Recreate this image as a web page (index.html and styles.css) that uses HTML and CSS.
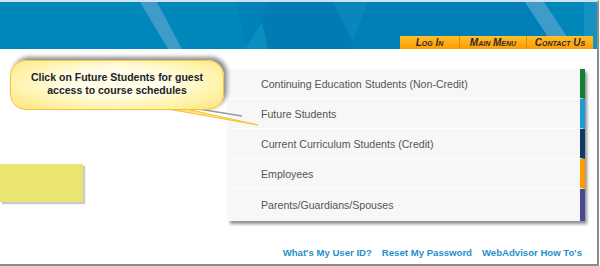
FILE: index.html
```html
<!DOCTYPE html>
<html>
<head>
<meta charset="utf-8">
<link rel="stylesheet" href="styles.css">
</head>
<body>
<div class="frame">
  <header class="header">
    <svg class="header-bg" width="597" height="47" viewBox="0 0 597 47" preserveAspectRatio="none">
      <rect width="597" height="47" fill="#0088bb"/>
      <polygon points="236,0 268,0 256,47 246,47" fill="#0082b8"/>
      <polygon points="268,0 333,0 356,47 250,47" fill="#007bb4"/>
      <polygon points="333,0 368,0 383,47 356,47" fill="#0a86bb"/>
      <polygon points="368,0 525,0 556,47 350,47" fill="#0080b7"/>
      <polygon points="140,0 157,0 182,47 168,47" fill="#3f9cc9"/>
      <polygon points="525,0 544,0 575,47 556,47" fill="#3f9cc9"/>
      <polygon points="584,0 597,0 597,47 584,47" fill="#1592c2"/>
      <polygon points="245,47 262,20 268,47" fill="#0a8ec0"/>
    </svg>
    <nav class="nav">
      <a class="tab tab-login">Log In</a>
      <a class="tab tab-menu">Main Menu</a>
      <a class="tab tab-contact">Contact Us</a>
    </nav>
  </header>
  <main class="main">
    <div class="left">
      <div class="yellow-block"></div>
    </div>
    <ul class="menu">
      <li class="item green">Continuing Education Students (Non-Credit)</li>
      <li class="item blue">Future Students</li>
      <li class="item navy">Current Curriculum Students (Credit)</li>
      <li class="item orange">Employees</li>
      <li class="item purple">Parents/Guardians/Spouses</li>
    </ul>
    <svg class="tail" width="120" height="30" viewBox="0 0 120 30">
      <polyline points="30,6 92,16" fill="none" stroke="#9a9a9a" stroke-width="1.6"/>
      <polygon points="12,8 32,8 108,25" fill="#ffe680" stroke="#f2c230" stroke-width="1"/>
    </svg>
    <div class="callout">Click on Future Students for guest<br>access to course schedules</div>
  </main>
  <footer class="links">
    <a class="link">What's My User ID?</a>
    <a class="link">Reset My Password</a>
    <a class="link">WebAdvisor How To's</a>
  </footer>
</div>
</body>
</html>
```
FILE: styles.css
```css
html, body {
  margin: 0;
  padding: 0;
  background: #ffffff;
}
body {
  width: 600px;
  height: 266px;
  overflow: hidden;
  font-family: "Liberation Sans", Arial, sans-serif;
}
.frame {
  width: 597px;
  height: 262px;
  border-top: 2px solid #cfe1ef;
  border-right: 2px solid #8c8c8c;
  border-bottom: 2px solid #8c8c8c;
  display: flex;
  flex-direction: column;
  background: #ffffff;
}
.header {
  height: 47px;
  position: relative;
  display: flex;
  justify-content: flex-end;
  align-items: flex-end;
  flex: none;
}
.header-bg {
  position: absolute;
  left: 0;
  top: 0;
  display: block;
}
.nav {
  position: relative;
  display: flex;
  margin-right: 4px;
  height: 13px;
}
.tab {
  display: flex;
  align-items: center;
  justify-content: center;
  height: 13px;
  background: linear-gradient(#ffc02a, #ff9c00);
  color: #2a2a2a;
  font-size: 10px;
  font-weight: bold;
  font-style: italic;
  font-variant: small-caps;
  border-left: 1px solid #e68a00;
}
.tab-login { width: 59px; border-left: none; }
.tab-menu { width: 66px; }
.tab-contact { width: 66px; }
.main {
  flex: 1;
  position: relative;
  display: flex;
  padding-top: 20px;
}
.left {
  width: 228px;
  flex: none;
}
.yellow-block {
  margin-top: 95px;
  width: 83px;
  height: 38px;
  background: #e9e56e;
  box-shadow: 2px 2px 1px #c9c9d6;
}
.menu {
  list-style: none;
  margin: 0;
  padding: 0;
  width: 357px;
  height: 152px;
  align-self: flex-start;
  box-shadow: 2px 3px 3px rgba(0, 0, 0, 0.45);
  background: #f7f7f7;
}
.item {
  box-sizing: border-box;
  height: 30px;
  padding-left: 33px;
  display: flex;
  align-items: center;
  font-size: 10.6px;
  color: #555555;
  background: #f7f7f7;
  border-bottom: 1px solid #ffffff;
  border-right: 5px solid #888;
}
.item:last-child {
  height: 32px;
  border-bottom: none;
}
.green { border-right-color: #0f7f32; }
.blue { border-right-color: #1a9ad6; }
.navy { border-right-color: #0e3a6a; }
.orange { border-right-color: #ff9a00; }
.purple { border-right-color: #4a4797; }
.callout {
  position: absolute;
  left: 10px;
  top: 11px;
  width: 214px;
  height: 50px;
  box-sizing: border-box;
  border: 1.5px solid #f3c437;
  border-radius: 16px;
  background: radial-gradient(ellipse at 50% 45%, #fffde8 35%, #fff2a8 70%, #ffe27a 100%);
  box-shadow: 3px -3px 4px rgba(0, 0, 0, 0.45);
  display: flex;
  align-items: center;
  justify-content: center;
  text-align: center;
  font-size: 10.5px;
  font-weight: bold;
  line-height: 13px;
  color: #222222;
  padding-bottom: 2px;
}
.tail {
  position: absolute;
  left: 150px;
  top: 51px;
  display: block;
}
.links {
  flex: none;
  height: 22px;
  display: flex;
  justify-content: flex-end;
  align-items: center;
  gap: 10px;
  padding-right: 15px;
  padding-bottom: 1px;
}
.link {
  font-size: 9.6px;
  font-weight: bold;
  color: #1f8fcc;
}
```
